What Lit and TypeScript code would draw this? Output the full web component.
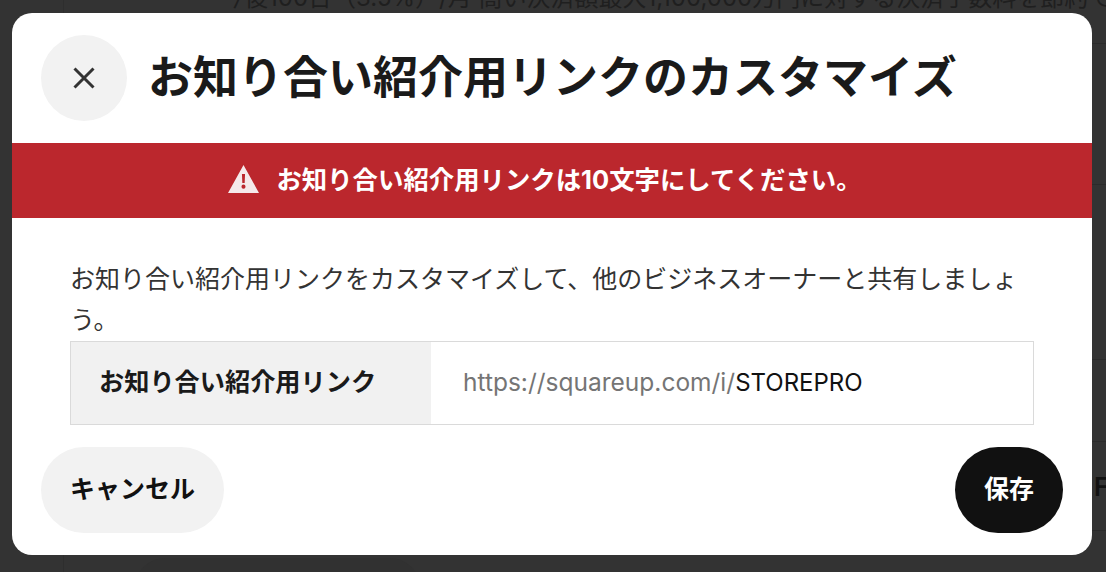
import { LitElement, html, css } from "lit";
import { customElement } from "lit/decorators.js";

@customElement("app-root")
export class AppRoot extends LitElement {
  static styles = css`
    :host {
      display: block;
      width: 1106px;
      height: 572px;
      position: relative;
      overflow: hidden;
      background: #333333;
      font-family: Inter, "Noto Sans CJK JP", sans-serif;
      color: #1a1a1a;
    }
    .behind-top {
      position: absolute;
      left: 220px;
      top: -14px;
      font-size: 24px;
      line-height: 24px;
      white-space: nowrap;
      color: #1f1f1f;
    }
    .behind-f {
      position: absolute;
      left: 1094px;
      top: 473px;
      font-size: 25px;
      line-height: 28px;
      font-weight: 600;
      color: #111;
    }
    .behind-dot {
      position: absolute;
      left: 1081px;
      top: 130px;
      font-size: 24px;
      line-height: 24px;
      color: #1f1f1f;
    }
    .line {
      position: absolute;
      left: 1092px;
      width: 14px;
      height: 1px;
      background: #2b2b2b;
    }
    .vline {
      position: absolute;
      left: 63px;
      top: 0;
      width: 1px;
      height: 572px;
      background: #2e2e2e;
    }
    .pill {
      position: absolute;
      left: 135px;
      top: 558px;
      width: 285px;
      height: 60px;
      border-radius: 30px;
      background: #313131;
    }
    .hatch {
      position: absolute;
      left: 0;
      top: 0;
    }
    .modal {
      position: absolute;
      left: 12px;
      top: 13px;
      width: 1080px;
      height: 542px;
      background: #fff;
      border-radius: 20px;
      overflow: hidden;
      display: flex;
      flex-direction: column;
    }
    .head {
      display: flex;
      align-items: center;
      gap: 21px;
      height: 130px;
      padding: 0 29px;
      box-sizing: border-box;
      flex: none;
    }
    .close {
      width: 86px;
      height: 86px;
      border-radius: 50%;
      background: #f2f2f2;
      display: flex;
      align-items: center;
      justify-content: center;
      flex: none;
    }
    h1 {
      margin: 0;
      font-size: 45px;
      line-height: 60px;
      font-weight: 700;
      color: #1a1a1a;
      white-space: nowrap;
    }
    .banner {
      height: 75px;
      box-sizing: border-box;
      padding: 0 14px 6px 0;
      flex: none;
      background: #bb272d;
      color: #fff;
      display: flex;
      align-items: center;
      justify-content: center;
      gap: 17px;
      font-size: 25.4px;
      font-weight: 700;
    }
    .banner svg {
      margin-top: 2px;
    }
    .body {
      padding: 41px 58px 0;
      flex: none;
    }
    p {
      margin: 0;
      font-size: 25px;
      line-height: 41px;
      color: #333;
    }
    .field {
      display: flex;
      height: 84px;
      box-sizing: border-box;
      border: 1px solid #dadada;
    }
    .label {
      width: 360px;
      flex: none;
      box-sizing: border-box;
      padding: 0 0 6px 28px;
      background: #f1f1f1;
      display: flex;
      align-items: center;
      font-size: 25.2px;
      font-weight: 700;
      color: #1a1a1a;
    }
    .value {
      display: flex;
      align-items: center;
      padding: 0 0 2px 32px;
      font-size: 24px;
      color: #111;
    }
    .prefix {
      color: #757575;
      font-size: 24.5px;
    }
    .foot {
      display: flex;
      justify-content: space-between;
      padding: 22px 29px;
    }
    .btn {
      height: 86px;
      box-sizing: border-box;
      padding: 0 29px 7px;
      border-radius: 43px;
      display: flex;
      align-items: center;
      font-size: 25px;
      font-weight: 700;
    }
    .cancel {
      background: #f2f2f2;
      color: #111;
    }
    .save {
      background: #111;
      color: #fff;
    }
  `;

  render() {
    const hatches = [55, 134, 213, 293, 371, 451, 530];
    const lines = [43, 184, 359, 441, 530];
    return html`
      <div class="vline"></div>
      <div class="pill"></div>
      <svg class="hatch" width="12" height="572" viewBox="0 0 12 572">
        ${hatches.map(
          (y) => html`<line x1="0" y1=${y + 6} x2="10" y2=${y - 4} stroke="#242424" stroke-width="2"></line>`
        )}
      </svg>
      <div class="behind-top">今後100台（3.5%）/月 高い決済額最大1,100,000万円に対する決済手数料を節約できる</div>
      <div class="behind-dot">。</div>
      <div class="behind-f">F</div>
      ${lines.map((y) => html`<div class="line" style="top:${y}px"></div>`)}
      <div class="modal">
        <div class="head">
          <div class="close">
            <svg width="22" height="22" viewBox="0 0 22 22" fill="none">
              <path d="M1.5 1.5 20.5 20.5M20.5 1.5 1.5 20.5" stroke="#333" stroke-width="3" />
            </svg>
          </div>
          <h1>お知り合い紹介用リンクのカスタマイズ</h1>
        </div>
        <div class="banner">
          <svg width="31" height="28" viewBox="0 0 32 28" preserveAspectRatio="none">
            <path fill="#f5e9ea" fill-rule="evenodd" d="M16 0 32 28H0ZM14.4 9h3.2l-.4 9h-2.4ZM16 19.6a2.1 2.1 0 1 1 0 4.2 2.1 2.1 0 0 1 0-4.2Z" />
          </svg>
          <span>お知り合い紹介用リンクは10文字にしてください。</span>
        </div>
        <div class="body">
          <p>お知り合い紹介用リンクをカスタマイズして、他のビジネスオーナーと共有しましょう。</p>
          <div class="field">
            <div class="label">お知り合い紹介用リンク</div>
            <div class="value"><span class="prefix">https://squareup.com/i/</span>STOREPRO</div>
          </div>
        </div>
        <div class="foot">
          <div class="btn cancel">キャンセル</div>
          <div class="btn save">保存</div>
        </div>
      </div>
    `;
  }
}
